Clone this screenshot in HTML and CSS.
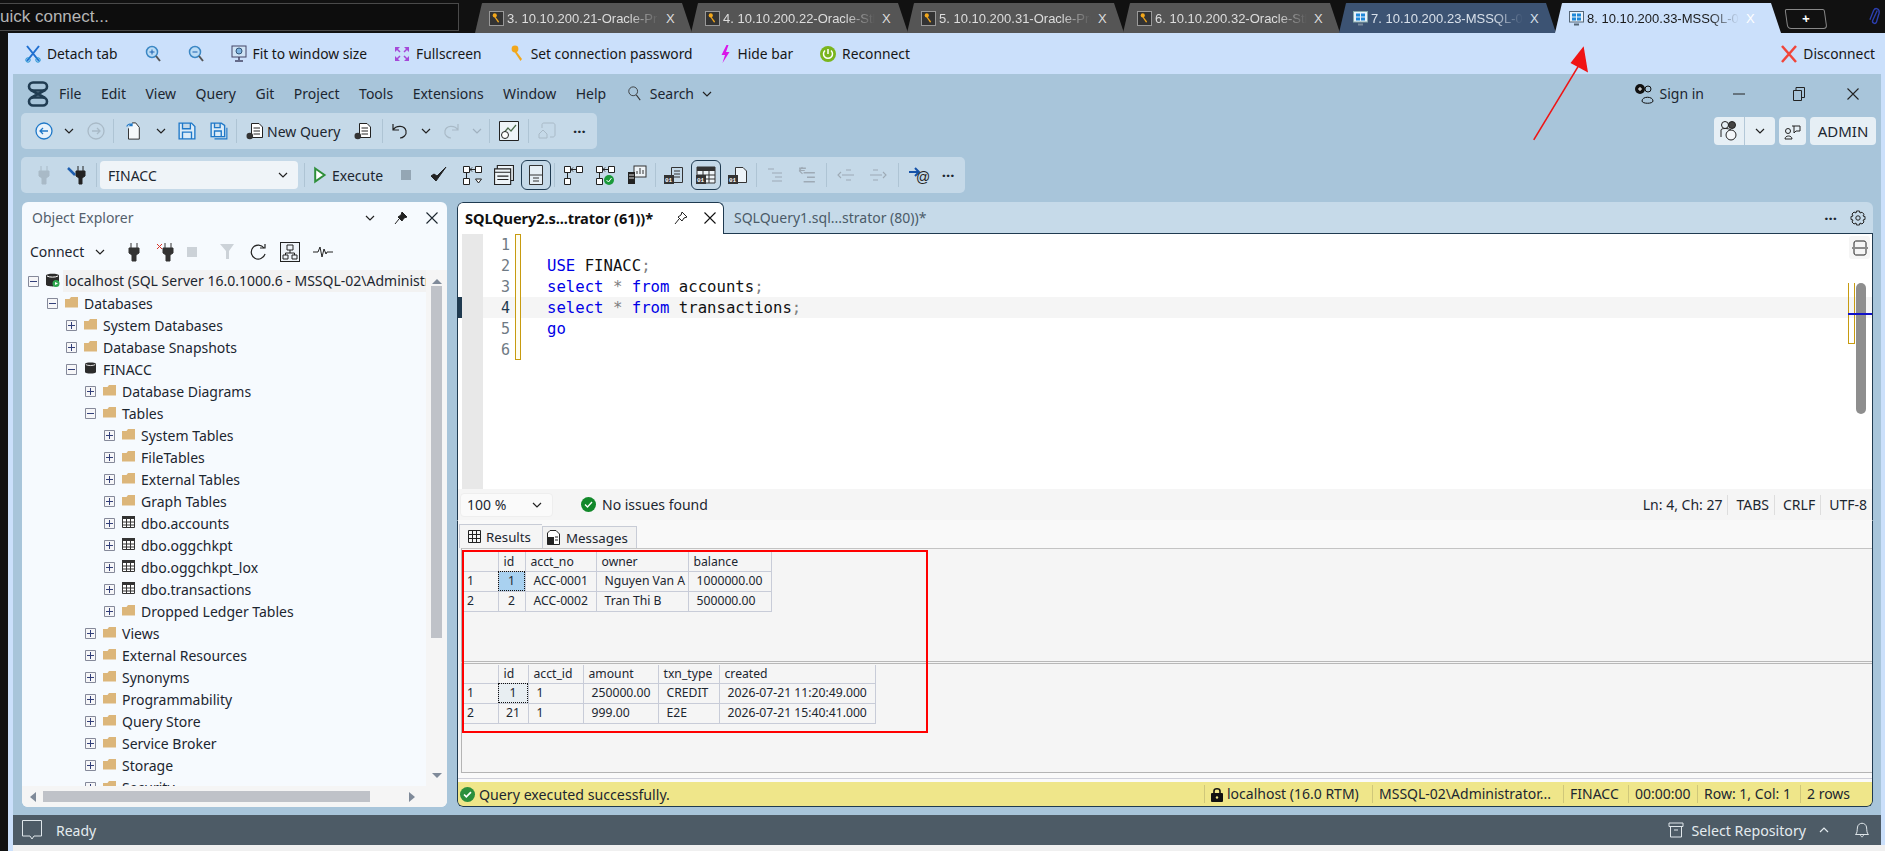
FILE: index.html
```html
<!DOCTYPE html>
<html lang="en">
<head>
    <meta charset="UTF-8">
    <title>SQL Server Management Studio - remote session</title>
    <link rel="stylesheet" href="styles.css">
</head>
<body>
<svg class="defs" width="0" height="0">
    <symbol id="folder" viewBox="0 0 13 12"><path d="M0 3V11.5H13V1H6L4.5 3Z" fill="#dcb67a"/></symbol>
    <symbol id="table" viewBox="0 0 13 12"><path d="M.5.5H12.5V11.5H.5Z" fill="#fff" stroke="#333"/><path d="M0 0H13V3H0Z" fill="#333"/><path d="M0 6H13M0 9H13M4.5 3V12M8.5 3V12" stroke="#333"/></symbol>
    <symbol id="plus" viewBox="0 0 11 11"><path d="M.5.5H10.5V10.5H.5Z" fill="#f6f6f8" stroke="#85899a"/><path d="M2 5.5H9M5.5 2V9" stroke="#33407a"/></symbol>
    <symbol id="minus" viewBox="0 0 11 11"><path d="M.5.5H10.5V10.5H.5Z" fill="#f6f6f8" stroke="#85899a"/><path d="M2 5.5H9" stroke="#33407a"/></symbol>
    <symbol id="db" viewBox="0 0 13 14"><path d="M0 2.5C0 0 13 0 13 2.5V11.5C13 14 0 14 0 11.5Z" fill="#2b2b2b"/><path d="M1 3C3 4.5 10 4.5 12 3" stroke="#fff" fill="none"/></symbol>
    <symbol id="chev" viewBox="0 0 10 6"><path d="M1 1L5 5L9 1" fill="none" stroke="currentColor" stroke-width="1.2"/></symbol>
    <symbol id="close" viewBox="0 0 12 12"><path d="M.5.5L11.5 11.5M11.5.5L.5 11.5" fill="none" stroke="currentColor" stroke-width="1.1"/></symbol>
    <symbol id="key" viewBox="0 0 12 18"><circle cx="4" cy="4" r="3.4" fill="#f2a71b"/><path d="M5 6L11 14L9.5 16L3.5 7Z" fill="#f2a71b"/></symbol>
    <symbol id="doc" viewBox="0 0 18 18"><path d="M5.5 1.5H13L16.5 5V15.5H5.5Z" fill="#fff" stroke="#222"/><path d="M7.5 6H14M7.5 9H14M7.5 12H14" stroke="#222"/><ellipse cx="3.8" cy="14" rx="3.3" ry="3.3" fill="#333"/></symbol>
    <symbol id="indent" viewBox="0 0 16 16"><path d="M1 2H7M5 6H15M8 10H15M5 14H15" stroke="#9eaab5" stroke-width="1.2" fill="none"/></symbol>
    <symbol id="outdent" viewBox="0 0 18 14"><path d="M5 7H17M9 2H14M9 12H14M4 4L1 7L4 10" stroke="#9eaab5" stroke-width="1.1" fill="none"/></symbol>
    <symbol id="flow" viewBox="0 0 20 20"><path d="M1.5 1.5H7.5V7.5H1.5ZM13.5 1.5H19.5V7.5H13.5ZM1.5 13.5H7.5V19.5H1.5Z" fill="#fff" stroke="#222"/><path d="M13 4.500H8M10 2.500L8 4.500L10 6.500M4.500 13V8" stroke="#222" fill="none"/></symbol>
</svg>

<div class="app">
    <header class="topbar">
        <div class="quick">uick connect...</div>
        <div class="tabs">
            <div class="rtab oracle"><svg class="rtab-ico" viewBox="0 0 15 15"><rect x=".5" y=".5" width="14" height="14" fill="#333" stroke="#999"/><use href="#key" x="3" y="2" width="8" height="11"/></svg><span class="rtab-text">3. 10.10.200.21-Oracle-Pri</span><span class="rtab-x">X</span></div>
            <div class="rtab oracle"><svg class="rtab-ico" viewBox="0 0 15 15"><rect x=".5" y=".5" width="14" height="14" fill="#333" stroke="#999"/><use href="#key" x="3" y="2" width="8" height="11"/></svg><span class="rtab-text">4. 10.10.200.22-Oracle-Stb</span><span class="rtab-x">X</span></div>
            <div class="rtab oracle"><svg class="rtab-ico" viewBox="0 0 15 15"><rect x=".5" y=".5" width="14" height="14" fill="#333" stroke="#999"/><use href="#key" x="3" y="2" width="8" height="11"/></svg><span class="rtab-text">5. 10.10.200.31-Oracle-Pri</span><span class="rtab-x">X</span></div>
            <div class="rtab oracle"><svg class="rtab-ico" viewBox="0 0 15 15"><rect x=".5" y=".5" width="14" height="14" fill="#333" stroke="#999"/><use href="#key" x="3" y="2" width="8" height="11"/></svg><span class="rtab-text">6. 10.10.200.32-Oracle-Stb</span><span class="rtab-x">X</span></div>
            <div class="rtab mssql"><svg class="rtab-ico" viewBox="0 0 15 15"><rect x=".5" y=".5" width="14" height="10.500" fill="#e8f2fb" stroke="#8aa"/><path d="M3 2.500H7V5.500H3ZM8 2.500H12V5.500H8ZM3 6.500H7V9.500H3ZM8 6.500H12V9.500H8Z" fill="#1e88d8"/><path d="M5 13.500H10" stroke="#789" stroke-width="2"/></svg><span class="rtab-text">7. 10.10.200.23-MSSQL-02</span><span class="rtab-x">X</span></div>
            <div class="rtab current"><svg class="rtab-ico" viewBox="0 0 15 15"><rect x=".5" y=".5" width="14" height="10.500" fill="#e8f2fb" stroke="#567"/><path d="M3 2.500H7V5.500H3ZM8 2.500H12V5.500H8ZM3 6.500H7V9.500H3ZM8 6.500H12V9.500H8Z" fill="#1e88d8"/><path d="M5 13.500H10" stroke="#567" stroke-width="2"/></svg><span class="rtab-text">8. 10.10.200.33-MSSQL-02</span><span class="rtab-x">X</span></div>
            <div class="newtab">+</div>
        </div>
        <svg class="clip" viewBox="0 0 12 24"><path d="M9 6L4 17C3 20 7 21 8 19L11 9C12 4 7 2 5 6L1 16" fill="none" stroke="#2c3fb0" stroke-width="1.5"/></svg>
    </header>

    <div class="session">
        <div class="hostbar">
            <div class="hostitem"><svg class="hi" viewBox="0 0 16 18"><path d="M2 1L14 16M14 1L2 16" stroke="#1f6fd0" stroke-width="2" fill="none"/><circle cx="3" cy="15" r="2.200" fill="none" stroke="#1a8fd0"/><circle cx="13" cy="15" r="2.200" fill="none" stroke="#1a8fd0"/></svg>Detach tab</div>
            <div class="hostitem zoomin"><svg class="hi" viewBox="0 0 16 18"><circle cx="7" cy="7" r="5.500" fill="#bcdcf5" stroke="#3b87c4" stroke-width="1.500"/><path d="M4.500 7H9.500M7 4.500V9.500" stroke="#1a60b0"/><path d="M11 11L15 16" stroke="#555" stroke-width="2"/></svg></div>
            <div class="hostitem zoomout"><svg class="hi" viewBox="0 0 16 18"><circle cx="7" cy="7" r="5.500" fill="#bcdcf5" stroke="#3b87c4" stroke-width="1.500"/><path d="M4.500 7H9.500" stroke="#1a60b0"/><path d="M11 11L15 16" stroke="#555" stroke-width="2"/></svg></div>
            <div class="hostitem fit"><svg class="hi" viewBox="0 0 16 18"><rect x="1" y="1" width="14" height="11" fill="#cfe3f5" stroke="#446"/><circle cx="8" cy="6" r="3" fill="#7fb4e0" stroke="#357"/><path d="M8 12V15M4 16H12" stroke="#446" stroke-width="1.500"/></svg>Fit to window size</div>
            <div class="hostitem"><svg class="hi" viewBox="0 0 16 16"><path d="M1 1H6L1 6ZM15 1H10L15 6ZM1 15H6L1 10ZM15 15H10L15 10Z" fill="#a548d8"/><path d="M3 3L6 6M13 3L10 6M3 13L6 10M13 13L10 10" stroke="#a548d8" stroke-width="1.500"/></svg>Fullscreen</div>
            <div class="hostitem"><svg class="hi" viewBox="0 0 12 18"><use href="#key"/></svg>Set connection password</div>
            <div class="hostitem"><svg class="hi bolt" viewBox="0 0 10 18"><path d="M6 0L1 10H4.500L2 18L9 7H5.500L8 0Z" fill="#d916e8"/></svg>Hide bar</div>
            <div class="hostitem"><svg class="hi" viewBox="0 0 16 16"><circle cx="8" cy="8" r="8" fill="#7ab51d"/><path d="M8 3V8M5 4.500A4.500 4.500 0 1 0 11 4.500" stroke="#fff" stroke-width="1.500" fill="none"/></svg>Reconnect</div>
            <div class="hostitem disconnect"><svg class="hi" viewBox="0 0 16 18"><path d="M1 1L15 17M15 1L1 17" stroke="#f0453a" stroke-width="2.500"/></svg>Disconnect</div>
        </div>

        <div class="ssms">
            <div class="menurow">
                <svg class="logo" viewBox="0 0 22 26"><rect x="2" y="1.500" width="18" height="8" rx="4" fill="none" stroke="#203c52" stroke-width="2.600"/><rect x="2" y="16.500" width="18" height="8" rx="4" fill="none" stroke="#203c52" stroke-width="2.600"/><path d="M4 9L18 17M18 9L4 17" fill="none" stroke="#203c52" stroke-width="2.600"/></svg>
                <nav class="menu">
                    <span>File</span><span>Edit</span><span>View</span><span>Query</span><span>Git</span><span>Project</span><span>Tools</span><span>Extensions</span><span>Window</span><span>Help</span>
                    <span class="menu-search"><svg class="s15" viewBox="0 0 15 17"><circle cx="6" cy="6" r="5" fill="none" stroke="#333"/><path d="M9.500 10L14 16" stroke="#333" stroke-width="1.200"/></svg>Search<svg class="ch" viewBox="0 0 10 6"><use href="#chev"/></svg></span>
                </nav>
                <div class="winctl">
                    <span class="signin"><svg class="s20" viewBox="0 0 20 20"><circle cx="5" cy="5" r="5" fill="#111"/><path d="M3 5H7M5 3V7" stroke="#fff"/><circle cx="13" cy="5" r="3" fill="none" stroke="#111"/><path d="M7 17C7 12 18 12 18 17C18 20 7 20 7 17Z" fill="none" stroke="#111"/></svg>Sign in</span>
                    <svg class="wbtn wide" viewBox="0 0 14 14"><path d="M1 7H13" stroke="#222"/></svg>
                    <svg class="wbtn" viewBox="0 0 14 14"><path d="M1.500 3.500H9.500V13.500H1.500ZM4 3.500V.5H12.500V10.500H9.500" fill="none" stroke="#222"/></svg>
                    <svg class="wbtn last" viewBox="0 0 12 12"><use href="#close"/></svg>
                </div>
            </div>

            <div class="toolrow first">
                <div class="toolbar tb1">
                    <span class="cell w28"><svg class="s18" viewBox="0 0 18 18"><circle cx="9" cy="9" r="8" fill="#e8f2fb" stroke="#1f78c8" stroke-width="1.300"/><path d="M13 9H5M8 6L5 9L8 12" stroke="#1f78c8" fill="none" stroke-width="1.300"/></svg></span>
                    <span class="cell w22"><svg class="ch" viewBox="0 0 10 6"><use href="#chev"/></svg></span>
                    <span class="cell w32 off"><svg class="s18" viewBox="0 0 18 18"><circle cx="9" cy="9" r="8" fill="none" stroke="#a9bac7" stroke-width="1.300"/><path d="M5 9H13M10 6L13 9L10 12" stroke="#a9bac7" fill="none" stroke-width="1.300"/></svg></span>
                    <i class="sep"></i>
                    <span class="cell w36"><svg class="s18" viewBox="0 0 16 20"><path d="M3 7V19H15V6L11 1H7" fill="#f4f8fb" stroke="#222"/><path d="M1 5C2 2 5 2 7 3M7 1V4H4" fill="none" stroke="#1f78c8" stroke-width="1.200"/></svg></span>
                    <span class="cell w20"><svg class="ch" viewBox="0 0 10 6"><use href="#chev"/></svg></span>
                    <span class="cell w32"><svg class="s18" viewBox="0 0 16 16"><path d="M1 1H12L15 4V15H1ZM4 1V6H11V1M4 15V9H12V15" fill="#dcecf8" stroke="#1f78c8" stroke-width="1.200"/></svg></span>
                    <span class="cell w32"><svg class="s18" viewBox="0 0 16 16"><path d="M1 1H10L13 3V13H1ZM4 1V5H9V1M4 13V8H10V13" fill="#dcecf8" stroke="#1f78c8" stroke-width="1.200"/><path d="M15 5V15H4" fill="none" stroke="#1f78c8"/></svg></span>
                    <i class="sep"></i>
                    <span class="cell newq"><svg class="s18" viewBox="0 0 18 18"><use href="#doc"/></svg>New Query</span>
                    <span class="cell w36"><svg class="s18" viewBox="0 0 18 18"><use href="#doc"/></svg></span>
                    <i class="sep"></i>
                    <span class="cell w32"><svg class="s16" viewBox="0 0 16 16"><path d="M1 1V7H7M1 7C4 2 13 2 14 8C15 12 11 15 8 15" fill="none" stroke="#222" stroke-width="1.200"/></svg></span>
                    <span class="cell w20"><svg class="ch" viewBox="0 0 10 6"><use href="#chev"/></svg></span>
                    <span class="cell w30 off"><svg class="s16" viewBox="0 0 16 16"><path d="M15 1V7H9M15 7C12 2 3 2 2 8C1 12 5 15 8 15" fill="none" stroke="#a9bac7" stroke-width="1.200"/></svg></span>
                    <span class="cell w22 off"><svg class="ch" viewBox="0 0 10 6"><use href="#chev"/></svg></span>
                    <i class="sep"></i>
                    <span class="cell w36"><svg class="s20" viewBox="0 0 20 20"><path d="M.5.5H19.500V19.500H.5Z" fill="#eef4f8" stroke="#222"/><path d="M3 14L9 7L12 10L17 4" fill="none" stroke="#4a6a4a" stroke-width="1.200"/><circle cx="6" cy="14" r="3.500" fill="#fff" stroke="#222"/></svg></span>
                    <i class="sep"></i>
                    <span class="cell w34 off"><svg class="s18" viewBox="0 0 18 18"><path d="M4 6V2.500C4 1.500 5 1 6 1H15C16 1 17 2 17 3V13C17 14 16 15 15 15H12M1 16V12L5 8L9 12V16Z" fill="none" stroke="#a9bac7"/></svg></span>
                    <span class="cell w30 dots">···</span>
                </div>
                <div class="acct">
                    <span class="acct-box"><span class="acct-left"><svg class="s20" viewBox="0 0 20 20"><circle cx="6" cy="4" r="3.500" fill="none" stroke="#222"/><circle cx="13" cy="4" r="3.500" fill="#444" stroke="#222"/><path d="M2 16V9C2 7 10 7 12 9" fill="none" stroke="#222"/><circle cx="12" cy="14" r="5" fill="#f4f7fa" stroke="#222"/></svg></span><span class="acct-chev"><svg class="ch" viewBox="0 0 10 6"><use href="#chev"/></svg></span></span>
                    <span class="acct-box small"><svg class="s18" viewBox="0 0 18 18"><circle cx="4" cy="9" r="2.500" fill="none" stroke="#222"/><path d="M1 17C1 13 8 13 8 17Z" fill="none" stroke="#222"/><path d="M8 4H16V9H12L10 11V4" fill="none" stroke="#222"/></svg></span>
                    <span class="acct-box admin">ADMIN</span>
                </div>
            </div>

            <div class="toolrow">
                <div class="toolbar tb2">
                    <span class="cell w28 off"><svg class="s18" viewBox="0 0 12 18"><path d="M3 0V5M9 0V5M1 5H11V10L8 12V18H4V12L1 10Z" fill="#a9bac7" stroke="#a9bac7"/></svg></span>
                    <span class="cell w33"><svg class="s20" viewBox="0 0 20 20"><path d="M11 1V6M16 1V6M9 6H18V11L15 13V19H12V13L9 11Z" fill="#222" stroke="#222"/><path d="M1 3L8 10" stroke="#1f5fb0" stroke-width="2.500"/></svg></span>
                    <i class="sep"></i>
                    <span class="dbselect"><span>FINACC</span><svg class="ch" viewBox="0 0 10 6"><use href="#chev"/></svg></span>
                    <i class="sep"></i>
                    <span class="execute"><svg class="play" viewBox="0 0 12 16"><path d="M1.200 1.500L10.500 8L1.200 14.500Z" fill="#fff" stroke="#2f8f3a" stroke-width="2"/></svg>Execute</span>
                    <span class="cell w30"><i class="stopbox"></i></span>
                    <span class="cell w32"><svg class="s18" viewBox="0 0 18 18"><path d="M1 10L6 15L16 1L7 10L4 8Z" fill="#222" stroke="#222"/></svg></span>
                    <span class="cell w30"><svg class="s20" viewBox="0 0 20 20"><use href="#flow"/><path d="M13.500 14H19.500L16.500 18Z" fill="#fff" stroke="#222"/></svg></span>
                    <span class="cell w30"><svg class="s20" viewBox="0 0 18 18"><path d="M3 3.500V.5H17.500V14H15" fill="#eef4f8" stroke="#222"/><path d="M.5 3.500H15V17.500H.5Z" fill="#eef4f8" stroke="#222"/><path d="M.5 6.500H15M3 10H13M3 13H13" stroke="#222"/></svg></span>
                    <span class="cell w30 boxed"><svg class="s20" viewBox="0 0 14 20"><path d="M.5.5H13.500V19.500H.5Z" fill="#e6eff5" stroke="#333"/><path d="M.5 10H13.500M4 13H10M4 16H10" stroke="#333"/></svg></span>
                    <i class="sep"></i>
                    <span class="cell w30"><svg class="s20" viewBox="0 0 20 20"><use href="#flow"/></svg></span>
                    <span class="cell w30"><svg class="s20" viewBox="0 0 20 20"><use href="#flow"/><circle cx="14" cy="15" r="5" fill="#1a9a3a"/><path d="M11.500 15L13.500 17L16.500 13" stroke="#fff" fill="none"/></svg></span>
                    <span class="cell w30"><svg class="s20" viewBox="0 0 20 20"><rect x="7" y="1" width="12" height="11" fill="#eef4f8" stroke="#333"/><path d="M10 9V6M13 9V3M16 9V5" stroke="#333"/><rect x="1" y="7" width="7" height="12" fill="#222"/><path d="M2 10H7M2 13H7" stroke="#ddd"/></svg></span>
                    <i class="sep"></i>
                    <span class="cell w30"><svg class="s20" viewBox="0 0 20 18"><path d="M7.500 1.500H18.500V16.500H7.500Z" fill="none" stroke="#333"/><path d="M10 5H16M10 8H16M10 11H16" stroke="#333"/><rect x="0" y="9" width="10" height="9" fill="#333"/><text x="1" y="16.400" class="bin">01</text></svg></span>
                    <span class="cell w30 boxed"><svg class="s20" viewBox="0 0 20 18"><path d="M1 1H19V17H1Z" fill="#eef4f8" stroke="#333"/><path d="M1 1H19V5H1Z" fill="#333"/><path d="M1 9H19M1 13H19M7 5V17M13 5V17" stroke="#333"/><rect x="0" y="9" width="10" height="9" fill="#333"/><text x="1" y="16.400" class="bin">01</text></svg></span>
                    <span class="cell w30"><svg class="s20" viewBox="0 0 20 18"><path d="M7.500 1.500H15L18.500 5V16.500H7.500Z" fill="#eef4f8" stroke="#333"/><rect x="0" y="9" width="10" height="9" fill="#333"/><text x="1" y="16.400" class="bin">01</text></svg></span>
                    <i class="sep"></i>
                    <span class="cell w30"><svg class="s16" viewBox="0 0 16 16"><use href="#indent"/></svg></span>
                    <span class="cell w30"><svg class="s18" viewBox="0 0 16 16"><use href="#indent"/><path d="M1 4L4 1M1 4L4 7M1 4H6" stroke="#9eaab5" fill="none"/></svg></span>
                    <i class="sep sep-m"></i>
                    <span class="cell w30"><svg class="s18" viewBox="0 0 18 14"><use href="#outdent"/></svg></span>
                    <span class="cell w30"><svg class="s18 flip" viewBox="0 0 18 14"><use href="#outdent"/></svg></span>
                    <i class="sep sep-l"></i>
                    <span class="cell w30"><svg class="s20" viewBox="0 0 20 18"><path d="M0 6H9M6 2L10 6L6 10" stroke="#1552a8" stroke-width="2" fill="none"/><text x="7" y="16" class="at">@</text></svg></span>
                    <span class="cell w24 dots">···</span>
                </div>
            </div>

            <div class="workspace">
                <aside class="explorer">
                    <div class="exp-head"><span class="exp-title">Object Explorer</span><svg class="ch" viewBox="0 0 10 6"><use href="#chev"/></svg><svg class="s14" viewBox="0 0 14 14"><path d="M8 1L13 6L10 7L8 10L4 6L7 4ZM5 8L1 13" fill="#222" stroke="#222"/></svg><svg class="s12" viewBox="0 0 12 12"><use href="#close"/></svg></div>
                    <div class="exp-tools">
                        <span class="connect">Connect<svg class="ch" viewBox="0 0 10 6"><use href="#chev"/></svg></span>
                        <svg class="s18 tl" viewBox="0 0 12 18"><path d="M3 0V5M9 0V5M1 5H11V10L8 12V18H4V12L1 10Z" fill="#333" stroke="#333"/></svg>
                        <svg class="s18 tl" viewBox="0 0 18 18"><path d="M9 0V5M15 0V5M7 5H17V10L14 12V18H10V12L7 10Z" fill="#333" stroke="#333"/><path d="M1 1L6 6M6 1L1 6" stroke="#d8352a"/></svg>
                        <i class="tl-stop"></i>
                        <svg class="s18 tl" viewBox="0 0 16 18"><path d="M1 1H15L10 8V16H7V8Z" fill="#ccd2d8"/></svg>
                        <svg class="s18 tl" viewBox="0 0 18 18"><path d="M15 5A7 7 0 1 0 16 11" fill="none" stroke="#222" stroke-width="1.200"/><path d="M11 5H16V1" fill="none" stroke="#222" stroke-width="1.200"/></svg>
                        <svg class="s20 tl" viewBox="0 0 20 20"><rect x=".5" y=".5" width="19" height="19" fill="#eef3f8" stroke="#222"/><path d="M7 3H13V8H7ZM3 13H8V17H3ZM12 13H17V17H12ZM10 8V11M5.500 13V11H14.500V13" fill="none" stroke="#222"/></svg>
                        <svg class="s20 tl" viewBox="0 0 20 12"><path d="M0 6H5L7 1L9 11L11 3L13 8L14 6H20" fill="none" stroke="#222"/></svg>
                    </div>
                    <div class="exp-body">
                        <div class="tree">
                            <div class="row root l0"><svg class="exp"><use href="#minus"/></svg><svg class="ico" viewBox="0 0 13 14"><use href="#db"/><circle cx="10" cy="10.500" r="3.500" fill="#2fa84f"/><path d="M9 9L12 10.500L9 12Z" fill="#fff"/></svg><span class="rootlabel">localhost (SQL Server 16.0.1000.6 - MSSQL-02\Administrator)</span></div>
                            <div class="row l1"><svg class="exp"><use href="#minus"/></svg><svg class="ico"><use href="#folder"/></svg>Databases</div>
                            <div class="row l2"><svg class="exp"><use href="#plus"/></svg><svg class="ico"><use href="#folder"/></svg>System Databases</div>
                            <div class="row l2"><svg class="exp"><use href="#plus"/></svg><svg class="ico"><use href="#folder"/></svg>Database Snapshots</div>
                            <div class="row l2"><svg class="exp"><use href="#minus"/></svg><svg class="ico" viewBox="0 0 13 14"><use href="#db"/></svg>FINACC</div>
                            <div class="row l3"><svg class="exp"><use href="#plus"/></svg><svg class="ico"><use href="#folder"/></svg>Database Diagrams</div>
                            <div class="row l3"><svg class="exp"><use href="#minus"/></svg><svg class="ico"><use href="#folder"/></svg>Tables</div>
                            <div class="row l4"><svg class="exp"><use href="#plus"/></svg><svg class="ico"><use href="#folder"/></svg>System Tables</div>
                            <div class="row l4"><svg class="exp"><use href="#plus"/></svg><svg class="ico"><use href="#folder"/></svg>FileTables</div>
                            <div class="row l4"><svg class="exp"><use href="#plus"/></svg><svg class="ico"><use href="#folder"/></svg>External Tables</div>
                            <div class="row l4"><svg class="exp"><use href="#plus"/></svg><svg class="ico"><use href="#folder"/></svg>Graph Tables</div>
                            <div class="row l4"><svg class="exp"><use href="#plus"/></svg><svg class="ico"><use href="#table"/></svg>dbo.accounts</div>
                            <div class="row l4"><svg class="exp"><use href="#plus"/></svg><svg class="ico"><use href="#table"/></svg>dbo.oggchkpt</div>
                            <div class="row l4"><svg class="exp"><use href="#plus"/></svg><svg class="ico"><use href="#table"/></svg>dbo.oggchkpt_lox</div>
                            <div class="row l4"><svg class="exp"><use href="#plus"/></svg><svg class="ico"><use href="#table"/></svg>dbo.transactions</div>
                            <div class="row l4"><svg class="exp"><use href="#plus"/></svg><svg class="ico"><use href="#folder"/></svg>Dropped Ledger Tables</div>
                            <div class="row l3"><svg class="exp"><use href="#plus"/></svg><svg class="ico"><use href="#folder"/></svg>Views</div>
                            <div class="row l3"><svg class="exp"><use href="#plus"/></svg><svg class="ico"><use href="#folder"/></svg>External Resources</div>
                            <div class="row l3"><svg class="exp"><use href="#plus"/></svg><svg class="ico"><use href="#folder"/></svg>Synonyms</div>
                            <div class="row l3"><svg class="exp"><use href="#plus"/></svg><svg class="ico"><use href="#folder"/></svg>Programmability</div>
                            <div class="row l3"><svg class="exp"><use href="#plus"/></svg><svg class="ico"><use href="#folder"/></svg>Query Store</div>
                            <div class="row l3"><svg class="exp"><use href="#plus"/></svg><svg class="ico"><use href="#folder"/></svg>Service Broker</div>
                            <div class="row l3"><svg class="exp"><use href="#plus"/></svg><svg class="ico"><use href="#folder"/></svg>Storage</div>
                            <div class="row l3"><svg class="exp"><use href="#plus"/></svg><svg class="ico"><use href="#folder"/></svg>Security</div>
                        </div>
                        <div class="vscroll"><i class="arr-up"></i><i class="vthumb"></i><i class="arr-down"></i></div>
                    </div>
                    <div class="hscroll"><i class="arr-left"></i><i class="hthumb"></i><i class="arr-right"></i></div>
                </aside>

                <section class="docwell">
                    <div class="doctabs">
                        <div class="doctab active"><b>SQLQuery2.s...trator (61))*</b><svg class="s14 pin" viewBox="0 0 14 14"><path d="M8 1L13 6L10 7L8 10L4 6L7 4ZM5 8L1 13" fill="none" stroke="#222"/></svg><svg class="s12" viewBox="0 0 12 12"><use href="#close"/></svg></div>
                        <div class="doctab idle">SQLQuery1.sql...strator (80))*</div>
                        <span class="doc-dots">···</span>
                        <svg class="gear" viewBox="0 0 16 16"><circle cx="8" cy="8" r="2.200" fill="none" stroke="#222"/><path d="M6.500 1H9.500L10 3L12 2.200L14 4.200L13 6L15 6.500V9.500L13 10L14 12L12 14L10 13L9.500 15H6.500L6 13L4 14L2 12L3 10L1 9.500V6.500L3 6L2 4L4 2L6 3Z" fill="none" stroke="#222"/></svg>
                    </div>
                    <div class="editor">
                        <div class="gutter"></div>
                        <div class="lines">
                            <div class="line"><span class="num">1</span><span class="change"></span><code></code></div>
                            <div class="line"><span class="num">2</span><span class="change"></span><code><em>USE</em> FINACC<u>;</u></code></div>
                            <div class="line"><span class="num">3</span><span class="change"></span><code><em>select</em> <u>*</u> <em>from</em> accounts<u>;</u></code></div>
                            <div class="line cur"><span class="num">4</span><span class="change"></span><code><em>select</em> <u>*</u> <em>from</em> transactions<u>;</u></code></div>
                            <div class="line"><span class="num">5</span><span class="change"></span><code><em>go</em></code></div>
                            <div class="line"><span class="num">6</span><span class="change"></span><code></code></div>
                        </div>
                        <span class="split"><svg class="s16" viewBox="0 0 16 16"><path d="M2 7V3C2 1 4 1 4 1H12C14 1 14 3 14 3V7M2 9V13C2 15 4 15 4 15H12C14 15 14 13 14 13V9M0 8H16" fill="none" stroke="#222"/></svg></span>
                        <i class="ov-yellow"></i><i class="ov-thumb"></i><i class="ov-blue"></i>
                    </div>
                    <div class="edstatus">
                        <span class="zoomsel">100 %<svg class="ch" viewBox="0 0 10 6"><use href="#chev"/></svg></span>
                        <span class="issues"><svg class="s15" viewBox="0 0 15 15"><circle cx="7.500" cy="7.500" r="7.500" fill="#12882a"/><path d="M4 7.500L6.500 10L11 5" stroke="#fff" stroke-width="1.300" fill="none"/></svg>No issues found</span>
                        <span class="edinfo"><span>Ln: 4, Ch: 27</span><span>TABS</span><span>CRLF</span><span>UTF-8</span></span>
                    </div>
                    <div class="results">
                        <div class="restabs">
                            <span class="restab on"><svg class="s13" viewBox="0 0 13 13"><path d="M.5.5H12.5V12.5H.5ZM.5 4.500H12.500M.5 8.500H12.500M4.500.5V12.500M8.500.5V12.500" fill="none" stroke="#222"/></svg>Results</span>
                            <span class="restab"><svg class="s13 msg" viewBox="0 0 13 15"><path d="M3 .5H9L12.500 4V14.500H.5V3Z" fill="#fff" stroke="#222"/><path d="M.5 7H7V14.500H.5Z" fill="#222"/><path d="M8 7H11M8 10H11" stroke="#222"/></svg>Messages</span>
                        </div>
                        <div class="gridwrap g1">
                            <table class="grid">
                                <colgroup><col class="c-rn"><col class="c27"><col class="c70"><col class="c92"><col class="c82"></colgroup>
                                <tr class="hd"><th></th><th>id</th><th>acct_no</th><th>owner</th><th>balance</th></tr>
                                <tr><td class="rn">1</td><td class="sel ctr">1</td><td>ACC-0001</td><td>Nguyen Van A</td><td>1000000.00</td></tr>
                                <tr><td class="rn">2</td><td class="ctr">2</td><td>ACC-0002</td><td>Tran Thi B</td><td>500000.00</td></tr>
                            </table>
                        </div>
                        <div class="gridwrap g2">
                            <table class="grid">
                                <colgroup><col class="c-rn"><col class="c30"><col class="c55"><col class="c75"><col class="c61"><col class="c156"></colgroup>
                                <tr class="hd"><th></th><th>id</th><th>acct_id</th><th>amount</th><th>txn_type</th><th>created</th></tr>
                                <tr><td class="rn">1</td><td class="sel2 ctr">1</td><td>1</td><td>250000.00</td><td>CREDIT</td><td>2026-07-21 11:20:49.000</td></tr>
                                <tr><td class="rn">2</td><td class="ctr">21</td><td>1</td><td>999.00</td><td>E2E</td><td>2026-07-21 15:40:41.000</td></tr>
                            </table>
                        </div>
                        <div class="resgap"></div>
                    </div>
                    <div class="qstatus">
                        <span class="qok"><svg class="s15" viewBox="0 0 13 13"><circle cx="6.500" cy="6.500" r="6.500" fill="#2a8f3c"/><path d="M3.500 6.500L5.500 8.500L9.500 4.500" stroke="#fff" stroke-width="1.500" fill="none"/></svg>Query executed successfully.</span>
                        <span class="qinfo">
                            <span class="q-host"><svg class="lock" viewBox="0 0 12 15"><path d="M3 6V4C3 1 9 1 9 4V6" fill="none" stroke="#111" stroke-width="1.600"/><rect y="6" width="12" height="9" rx="1" fill="#111"/><circle cx="6" cy="10.500" r="1.200" fill="#efe68a"/></svg>localhost (16.0 RTM)</span>
                            <span class="q-user">MSSQL-02\Administrator...</span>
                            <span class="q-db">FINACC</span>
                            <span class="q-time">00:00:00</span>
                            <span class="q-pos">Row: 1, Col: 1</span>
                            <span class="q-rows">2 rows</span>
                        </span>
                    </div>
                </section>
            </div>

            <footer class="statusbar">
                <svg class="st-ico" viewBox="0 0 20 20"><path d="M.5.5H19.500V16H12L10 19L8 16H.5Z" fill="none" stroke="#dfe6ea"/></svg>
                <span class="ready">Ready</span>
                <span class="repo"><svg class="s16" viewBox="0 0 16 16"><path d="M1 1H15V4.500H1ZM2.500 4.500V15H13.500V4.500M6 8H10" fill="none" stroke="#dfe6ea"/></svg>Select Repository<svg class="ch up" viewBox="0 0 10 6"><use href="#chev"/></svg><svg class="s16 bell" viewBox="0 0 16 16"><path d="M1.500 12.500C3.500 11 3 8 3.500 5C4.500 0 11.500 0 12.500 5C13 8 12.500 11 14.500 12.500ZM6.500 12.500C6.500 15.500 9.500 15.500 9.500 12.500" fill="none" stroke="#dfe6ea"/></svg></span>
            </footer>
        </div>
        <div class="bottomstrip"></div>
    </div>

    <div class="redbox"></div>
    <svg class="redarrow" viewBox="0 0 80 110"><path d="M2 108L54 22" stroke="#f01414" stroke-width="1.800" fill="none"/><path d="M59 1L64 31L44 20Z" fill="#f01414"/></svg>
</div>
</body>
</html>
```

FILE: styles.css
```css
* {
    box-sizing: border-box;
}
html, body {
    margin: 0;
    height: 100%;
    overflow: hidden;
}
body {
    font-family: "Noto Sans", "Liberation Sans", sans-serif;
    font-size: 14px;
    color: #1c2630;
    background-color: #111;
}
i, em, u, b {
    font-style: normal;
    text-decoration: none;
}
svg {
    flex: none;
    display: block;
    overflow: visible;
}
.defs {
    position: absolute;
}
.bin {
    font: bold 6px "Liberation Mono", monospace;
    fill: #fff;
}
.at {
    font: 14px "Liberation Sans", sans-serif;
    fill: #222;
}
.app {
    position: relative;
    width: 1885px;
    height: 851px;
    display: flex;
    flex-direction: column;
}

/* remote desktop manager tabs */
.topbar {
    height: 33px;
    flex: none;
    display: flex;
    align-items: flex-end;
    background-color: #111;
}
.quick {
    width: 459px;
    height: 28px;
    margin-bottom: 2px;
    padding-left: 0;
    border: 1px solid #4a4a4a;
    border-left: none;
    color: #b5b5b5;
    font: 17px/26px "Liberation Sans", sans-serif;
    background-color: #0d0d0d;
}
.tabs {
    display: flex;
    align-items: flex-end;
    margin-left: 16px;
    height: 30px;
}
.rtab {
    width: 217px;
    height: 30px;
    margin-right: -1px;
    padding: 0 0 0 8px;
    display: flex;
    align-items: center;
    gap: 3px;
    font: 13px "Liberation Sans", sans-serif;
    color: #ddd;
    clip-path: polygon(7px 0, calc(100% - 10px) 0, 100% 100%, 0 100%);
    border-radius: 8px 8px 0 0;
}
.oracle {
    background-color: #555;
}
.mssql {
    background-color: #3c5373;
    color: #d8e0ea;
}
.current {
    width: 226px;
    background-color: #cbe0fb;
    color: #1a1a1a;
}
.rtab-ico {
    width: 15px;
    height: 15px;
    margin-left: 6px;
}
.rtab-text {
    width: 152px;
    white-space: nowrap;
    overflow: hidden;
    -webkit-mask-image: linear-gradient(to right, #000 80%, transparent 100%);
    mask-image: linear-gradient(to right, #000 80%, transparent 100%);
}
.rtab-x {
    margin-left: 4px;
    font-size: 13px;
}
.current .rtab-x {
    color: #fff;
}
.newtab {
    width: 40px;
    height: 20px;
    margin: 0 0 4px 6px;
    border: 1px solid #888;
    border-radius: 2px 2px 4px 4px;
    text-align: center;
    color: #fff;
    font: bold 13px/18px "Liberation Sans", sans-serif;
    transform: skewX(8deg);
}
.clip {
    width: 11px;
    height: 24px;
    margin: 0 0 5px 43px;
}

/* session frame */
.session {
    flex: 1;
    margin-left: 8px;
    padding: 0 4px 0 5px;
    display: flex;
    flex-direction: column;
    background-color: #cbe0fb;
    min-height: 0;
}
.hostbar {
    height: 41px;
    flex: none;
    padding-left: 12px;
    padding-right: 6px;
    display: flex;
    align-items: center;
    gap: 27px;
    color: #161616;
    font-size: 13.8px;
}
.hostitem {
    display: flex;
    align-items: center;
    gap: 6px;
    white-space: nowrap;
}
.hi {
    width: 16px;
    height: 18px;
}
.bolt {
    width: 11px;
    margin-right: 1px;
}
.disconnect {
    margin-left: auto;
}
.ssms {
    flex: 1;
    min-height: 0;
    display: flex;
    flex-direction: column;
    padding-top: 0;
    background-color: #a8c5da;
}
.menurow {
    height: 39px;
    flex: none;
    display: flex;
    align-items: center;
    padding-left: 14px;
}
.logo {
    width: 22px;
    height: 26px;
}
.menu {
    display: flex;
    align-items: center;
    gap: 19.5px;
    margin-left: 10px;
    color: #1c2630;
}
.menu-search {
    display: flex;
    align-items: center;
    gap: 8px;
    margin-left: 1px;
}
.winctl {
    margin-left: auto;
    display: flex;
    align-items: center;
}
.signin {
    display: flex;
    align-items: center;
    gap: 5px;
    margin-right: 28px;
}
.wbtn {
    width: 14px;
    height: 14px;
    margin-right: 41px;
    color: #222;
}
.wbtn.wide {
    margin-right: 46px;
}
.wbtn.last {
    width: 12px;
    height: 12px;
    margin-right: 22px;
}
.ch {
    width: 10px;
    height: 6px;
    color: #222;
}
.s12 { width: 12px; height: 12px; }
.s13 { width: 13px; height: 13px; }
.s14 { width: 14px; height: 14px; }
.s15 { width: 15px; height: 15px; }
.s16 { width: 16px; height: 16px; }
.s18 { width: 18px; height: 18px; }
.s20 { width: 20px; height: 20px; }
.flip {
    transform: scaleX(-1);
}

/* toolbars */
.toolrow {
    height: 36px;
    flex: none;
    margin-bottom: 8px;
    display: flex;
    justify-content: space-between;
    padding-left: 8px;
    padding-right: 5px;
}
.toolbar {
    height: 36px;
    display: flex;
    align-items: center;
    background-color: #c5d9e8;
    border-radius: 5px;
}
.tb1 {
    width: 576px;
    padding-left: 9px;
}
.tb2 {
    width: 944px;
    padding-left: 9px;
    gap: 2px;
}
.cell {
    height: 30px;
    display: flex;
    align-items: center;
    justify-content: center;
    flex: none;
    border-radius: 6px;
}
.w20 { width: 20px; }
.w22 { width: 22px; }
.w24 { width: 24px; }
.w28 { width: 28px; }
.w30 { width: 30px; }
.w32 { width: 32px; }
.w33 { width: 33px; }
.w34 { width: 34px; }
.w36 { width: 36px; }
.off .ch {
    color: #a0b1bf;
}
.sep {
    width: 1px;
    height: 24px;
    flex: none;
    margin: 0 1px;
    background-color: #aec4d4;
}
.sep-m {
    margin: 0 2px;
}
.sep-l {
    margin: 0 3px;
}
.newq {
    padding: 0 5px 0 8px;
    gap: 3px;
    white-space: nowrap;
}
.dots {
    font-weight: bold;
    letter-spacing: 0;
    font-size: 15px;
}
.boxed {
    border: 1px solid #1f3a50;
}
.dbselect {
    width: 198px;
    height: 28px;
    margin: 0 3px 0 0;
    padding: 0 10px 0 8px;
    display: flex;
    align-items: center;
    justify-content: space-between;
    background-color: #eff4f8;
    border-radius: 4px;
}
.execute {
    display: flex;
    align-items: center;
    gap: 6px;
    padding: 0 6px 0 6px;
}
.play {
    width: 12px;
    height: 16px;
}
.stopbox {
    width: 10px;
    height: 10px;
    background-color: #94a6b4;
}
.acct {
    display: flex;
    gap: 4px;
    height: 28px;
    margin-top: 4px;
}
.acct-box {
    display: flex;
    align-items: center;
    justify-content: center;
    background-color: #e6eff5;
    border-radius: 4px;
}
.acct-left {
    width: 31px;
    height: 100%;
    display: flex;
    align-items: center;
    justify-content: center;
    border-right: 1px solid #b3c8d8;
}
.acct-chev {
    width: 30px;
    display: flex;
    justify-content: center;
}
.small {
    width: 27px;
}
.admin {
    width: 66px;
    font-size: 15px;
}

/* main area */
.workspace {
    flex: 1;
    min-height: 0;
    display: flex;
    gap: 10px;
    padding: 1px 8px 0 9px;
}
.explorer {
    width: 425px;
    flex: none;
    display: flex;
    flex-direction: column;
    background-color: #f6fafe;
    border-radius: 6px;
    overflow: hidden;
}
.exp-head {
    height: 31px;
    flex: none;
    display: flex;
    align-items: center;
    padding: 0 9px 0 10px;
}
.exp-title {
    flex: 1;
    color: #54606c;
}
.exp-head .ch {
    margin-right: 19px;
}
.exp-head .s14 {
    margin-right: 18px;
}
.exp-tools {
    height: 37px;
    flex: none;
    display: flex;
    align-items: center;
    padding-left: 8px;
}
.connect {
    display: flex;
    align-items: center;
    gap: 11px;
    margin-right: 20px;
}
.tl {
    margin-right: 13px;
}
.tl-stop {
    width: 10px;
    height: 10px;
    margin-right: 21px;
    background-color: #ccd2d8;
}
.exp-body {
    flex: 1;
    min-height: 0;
    display: flex;
}
.tree {
    flex: 1;
    min-width: 0;
    overflow: hidden;
}
.row {
    height: 22px;
    display: flex;
    align-items: center;
    white-space: nowrap;
}
.l0 { padding-left: 6px; }
.l1 { padding-left: 25px; }
.l2 { padding-left: 44px; }
.l3 { padding-left: 63px; }
.l4 { padding-left: 82px; }
.exp {
    width: 11px;
    height: 11px;
}
.ico {
    width: 13px;
    height: 12px;
    margin: -3px 6px 0 7px;
}
.root .ico {
    height: 14px;
}
.rootlabel {
    flex: 1;
    min-width: 0;
    overflow: hidden;
    margin-left: -2px;
    padding-left: 2px;
    line-height: 22px;
    background-color: #f2f2f2;
}
.vscroll {
    width: 21px;
    flex: none;
    position: relative;
    display: flex;
    flex-direction: column;
    align-items: center;
    padding: 9px 0 8px;
    justify-content: space-between;
    background-color: #f5f5f5;
}
.arr-up, .arr-down {
    width: 0;
    height: 0;
    border-left: 5px solid transparent;
    border-right: 5px solid transparent;
}
.arr-up {
    border-bottom: 5px solid #7f8a99;
}
.arr-down {
    border-top: 5px solid #7f8a99;
}
.vthumb {
    width: 11px;
    height: 352px;
    margin-top: 2px;
    margin-bottom: auto;
    background-color: #bfc2c8;
}
.hscroll {
    height: 21px;
    flex: none;
    display: flex;
    align-items: center;
    padding-left: 8px;
    background-color: #f5f5f5;
}
.arr-left, .arr-right {
    width: 0;
    height: 0;
    border-top: 5px solid transparent;
    border-bottom: 5px solid transparent;
}
.arr-left {
    border-right: 6px solid #7f8a99;
}
.hthumb {
    width: 327px;
    height: 11px;
    margin-left: 7px;
    background-color: #bfc2c8;
}
.arr-right {
    margin-left: 39px;
    border-left: 6px solid #7f8a99;
}

/* document well */
.docwell {
    flex: 1;
    min-width: 0;
    display: flex;
    flex-direction: column;
    border-radius: 6px;
    overflow: hidden;
    background-color: #c6dae9;
}
.doctabs {
    height: 32px;
    flex: none;
    display: flex;
    align-items: center;
    border-bottom: 1px solid #1f3a50;
    padding-right: 7px;
}
.doctab {
    height: 32px;
    display: flex;
    align-items: center;
    white-space: nowrap;
}
.active {
    width: 267px;
    padding-left: 7px;
    background-color: #fff;
    border: 1px solid #1f3a50;
    border-bottom: none;
    border-radius: 6px 6px 0 0;
    color: #111;
}
.active b {
    font-weight: 700;
    font-size: 14.6px;
    letter-spacing: -0.1px;
    width: 209px;
}
.pin {
    margin-right: 16px;
}
.idle {
    margin-left: 10px;
    color: #4b5a68;
}
.doc-dots {
    margin-left: auto;
    font-weight: bold;
    font-size: 15px;
    margin-right: 13px;
}
.gear {
    width: 16px;
    height: 16px;
}
.editor {
    position: relative;
    height: 255px;
    flex: none;
    background-color: #fff;
    display: flex;
    border-left: 1px solid #1f3a50;
    border-right: 1px solid #1f3a50;
}
.gutter {
    position: absolute;
    left: 4px;
    top: 0;
    bottom: 0;
    width: 21px;
    background-color: #e8e8e8;
}
.lines {
    flex: 1;
    padding-top: 0;
    position: relative;
}
.line {
    height: 21px;
    display: flex;
    align-items: center;
}
.line.cur {
    background: linear-gradient(to right, #1f3a50 4px, #e8e8e8 4px, #e8e8e8 25px, #f5f5f5 25px);
}
.num {
    width: 52px;
    text-align: right;
    color: #6f7a84;
    font: 15px "DejaVu Sans Mono", monospace;
}
.cur .num {
    color: #1f3a50;
}
.change {
    width: 6px;
    height: 21px;
    margin-left: 5px;
    border-left: 1px solid #c79b10;
    border-right: 1px solid #c79b10;
    background-color: #fffdf0;
}
.line:first-child .change {
    border-top: 1px solid #c79b10;
}
.line:last-child .change {
    border-bottom: 1px solid #c79b10;
}
code {
    margin-left: 26px;
    font: 15.65px "DejaVu Sans Mono", monospace;
    color: #111;
    white-space: pre;
}
code em {
    color: #0000e6;
}
code u {
    color: #7f7f7f;
}
.split {
    position: absolute;
    right: 2px;
    top: 2px;
    width: 21px;
    height: 23px;
    display: flex;
    align-items: center;
    justify-content: center;
    border-radius: 3px;
    background-color: #f5f5f5;
}
.ov-yellow {
    position: absolute;
    right: 17px;
    top: 49px;
    width: 7px;
    height: 61px;
    border: 1px solid #c79b10;
    border-top: none;
}
.ov-thumb {
    position: absolute;
    right: 6px;
    top: 49px;
    width: 10px;
    height: 131px;
    border-radius: 5px;
    background-color: #8e8e8e;
}
.ov-blue {
    position: absolute;
    right: 0;
    top: 79px;
    width: 24px;
    height: 2px;
    background-color: #1010c8;
}
.edstatus {
    height: 32px;
    flex: none;
    display: flex;
    align-items: center;
    background-color: #f5f5f5;
    padding-left: 2px;
    border-left: 1px solid #1f3a50;
    border-right: 1px solid #1f3a50;
    border-bottom: 1px solid #f9f9f9;
}
.zoomsel {
    width: 93px;
    height: 24px;
    padding: 0 10px 0 6px;
    display: flex;
    align-items: center;
    justify-content: space-between;
    background-color: #fafafa;
    border: 1px solid #eee;
    border-radius: 4px;
}
.issues {
    display: flex;
    align-items: center;
    gap: 6px;
    margin-left: 28px;
}
.edinfo {
    margin-left: auto;
    display: flex;
    align-items: center;
}
.edinfo span {
    padding: 0 5px 0 8px;
    border-left: 1px solid #ddd;
    line-height: 20px;
}
.edinfo span:first-child {
    border-left: none;
}
.results {
    flex: 1;
    min-height: 0;
    display: flex;
    flex-direction: column;
    background-color: #f5f5f5;
    border-left: 1px solid #1f3a50;
    border-right: 1px solid #1f3a50;
}
.restabs {
    height: 27px;
    flex: none;
    display: flex;
    align-items: flex-end;
    padding-left: 1px;
    background-color: #f9f9f9;
}
.restab {
    height: 22px;
    padding: 0 8px 0 4px;
    display: flex;
    align-items: center;
    gap: 6px;
    font-size: 13.3px;
    border: 1px solid #c8ccd6;
    border-bottom: none;
    background-color: #f2f2f2;
}
.restab.on {
    height: 24px;
    padding: 0 11px 0 8px;
    gap: 5px;
    background-color: #f5f5f5;
    border-right: none;
}
.msg {
    height: 15px;
}
.gridwrap {
    flex: none;
    margin-left: 3px;
    padding-left: 1px;
    border-top: 1px solid #c4c4c4;
    border-left: 1px solid #b4b4b4;
}
.g1 {
    height: 113px;
    padding-top: 3px;
}
.g2 {
    height: 112px;
    padding-top: 1px;
    border-top: 3px double #b8b8b8;
    border-bottom: 1px solid #b4b4b4;
}
.grid {
    border-collapse: collapse;
    table-layout: fixed;
    font-size: 12.2px;
    color: #1c2630;
}
.c-rn { width: 35px; }
.c27 { width: 27px; }
.c30 { width: 30px; }
.c55 { width: 55px; }
.c61 { width: 61px; }
.c70 { width: 71px; }
.c75 { width: 75px; }
.c82 { width: 83px; }
.c92 { width: 92px; }
.c156 { width: 156px; }
.grid th, .grid td {
    height: 20px;
    padding: 0 0 0 5px;
    font-weight: normal;
    text-align: left;
    white-space: nowrap;
    border-right: 1px solid #c8ccd8;
    border-bottom: 1px solid #c8ccd8;
}
.grid .hd th {
    height: 19px;
    border-bottom-color: #c8ccd8;
}
.g2 .grid .hd th {
    height: 18px;
}
.grid td {
    padding-left: 8px;
    padding-bottom: 1px;
}
.grid .rn {
    padding-left: 4px;
}
.grid .ctr {
    padding-left: 0;
    text-align: center;
}
.sel {
    outline: 1px dotted #111;
    outline-offset: -1px;
    background-color: #a9d1f0;
}
.sel2 {
    outline: 1px dotted #111;
    outline-offset: -1px;
    background-color: #e8eef2;
}
.resgap {
    flex: 1;
    background: linear-gradient(#fafafa 5px, #cfd0d8 5px, #cfd0d8 6px, #fafafa 6px);
}
.qstatus {
    height: 25px;
    flex: none;
    display: flex;
    align-items: center;
    padding-left: 2px;
    border: 1px solid #1f3a50;
    border-top: none;
    border-radius: 0 0 6px 6px;
    background-color: #efe68a;
}
.qok {
    display: flex;
    align-items: center;
    gap: 4px;
    font-size: 14.2px;
}
.qinfo {
    margin-left: auto;
    display: flex;
    height: 100%;
    align-items: center;
}
.qinfo > span {
    padding-left: 6px;
    height: 18px;
    line-height: 18px;
    border-left: 1px solid #cfc77a;
    white-space: nowrap;
}
.q-host {
    width: 168px;
    display: flex;
    align-items: center;
    gap: 4px;
}
.q-user { width: 191px; }
.q-db { width: 65px; }
.q-time { width: 69px; }
.q-pos { width: 103px; }
.q-rows { width: 72px; }
.lock {
    width: 12px;
    height: 15px;
}
.statusbar {
    height: 30px;
    flex: none;
    margin-top: 8px;
    display: flex;
    align-items: center;
    padding-left: 9px;
    background-color: #4d5b66;
    color: #e4ebef;
}
.st-ico {
    width: 20px;
    height: 20px;
}
.ready {
    margin-left: 14px;
}
.repo {
    margin-left: auto;
    display: flex;
    align-items: center;
    gap: 8px;
    margin-right: 11px;
    font-size: 14.2px;
}
.up {
    color: #e4ebef;
    transform: scaleY(-1);
    margin-left: 5px;
}
.bell {
    margin-left: 17px;
}
.bottomstrip {
    height: 6px;
    flex: none;
    margin-right: -4px;
    background-color: #f0f0f0;
}

/* annotations drawn on the screenshot */
.redbox {
    position: absolute;
    left: 462px;
    top: 550px;
    width: 466px;
    height: 183px;
    border: 2px solid #f00;
}
.redarrow {
    position: absolute;
    left: 1532px;
    top: 44px;
    width: 70px;
    height: 99px;
}
```
